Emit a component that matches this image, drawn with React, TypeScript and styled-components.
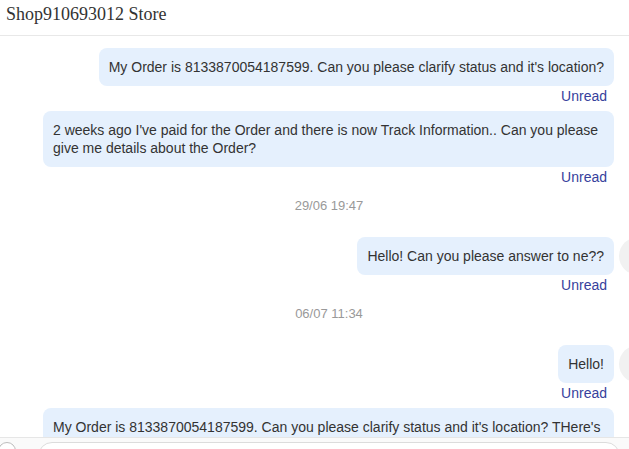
import React from "react";
import styled, { createGlobalStyle } from "styled-components";

const Global = createGlobalStyle`
  html, body { margin: 0; padding: 0; background: #ffffff; overflow: hidden; }
  body { width: 629px; height: 449px; }
  #root { width: 629px; height: 449px; overflow: hidden; }
`;

const Page = styled.div`
  width: 629px;
  height: 449px;
  display: flex;
  flex-direction: column;
  overflow: hidden;
  font-family: Arial, "Liberation Sans", sans-serif;
  color: #333333;
`;

const Header = styled.header`
  flex: 0 0 auto;
  height: 36px;
  box-sizing: border-box;
  border-bottom: 1px solid #e8e8e8;
  padding: 3px 0 0 6px;
  font-family: "Liberation Serif", "Times New Roman", serif;
  font-size: 18px;
  line-height: 22px;
  color: #333333;
`;

const Messages = styled.div`
  flex: 1 1 auto;
  min-height: 0;
  width: 658px;
  overflow: hidden;
  padding-top: 12px;
  display: flex;
  flex-direction: column;
`;

const Item = styled.div`
  display: flex;
  flex-direction: column;
  margin-bottom: 6px;
`;

const Row = styled.div`
  display: flex;
  justify-content: flex-end;
  align-items: flex-start;
  padding-left: 43px;
  gap: 5px;
`;

const Bubble = styled.div`
  max-width: 571px;
  box-sizing: border-box;
  background: #e5f0fd;
  border-radius: 8px;
  padding: 10px 10px;
  font-size: 14px;
  line-height: 18px;
  color: #333333;
`;

const Avatar = styled.div<{ $shown: boolean }>`
  flex: 0 0 39px;
  width: 39px;
  height: 38px;
  border-radius: 50%;
  background: ${(p) => (p.$shown ? "#f1f1f1" : "transparent")};
`;

const Status = styled.div`
  margin-top: 1px;
  padding-right: 51px;
  text-align: right;
  font-size: 14px;
  line-height: 18px;
  color: #36419c;
`;

const Stamp = styled.div`
  padding: 5px 0 22px;
  text-align: center;
  font-size: 13px;
  line-height: 18px;
  color: #999999;
`;

const Footer = styled.footer`
  flex: 0 0 12px;
  height: 12px;
  box-sizing: border-box;
  border-top: 1px solid #e6e6e6;
  background: #fafafa;
  display: flex;
  align-items: flex-start;
  gap: 22px;
  padding: 4px 9px 0 0;
  margin-left: -2px;
  overflow: hidden;
`;

const Emoji = styled.div`
  flex: 0 0 18px;
  height: 18px;
  border-radius: 50%;
  border: 1px solid #bdbdbd;
  box-sizing: border-box;
  background: #ffffff;
`;

const Input = styled.div`
  flex: 1 1 auto;
  height: 30px;
  border: 1px solid #dcdcdc;
  border-radius: 14px;
  background: #ffffff;
`;

type Msg =
  | { kind: "msg"; text: string; avatar?: boolean }
  | { kind: "time"; text: string };

const data: Msg[] = [
  {
    kind: "msg",
    text: "My Order is 8133870054187599. Can you please clarify status and it's location?",
  },
  {
    kind: "msg",
    text: "2 weeks ago I've paid for the Order and there is now Track Information.. Can you please give me details about the Order?",
  },
  { kind: "time", text: "29/06 19:47" },
  { kind: "msg", text: "Hello! Can you please answer to ne??", avatar: true },
  { kind: "time", text: "06/07 11:34" },
  { kind: "msg", text: "Hello!", avatar: true },
  {
    kind: "msg",
    text: "My Order is 8133870054187599. Can you please clarify status and it's location? THere's no track information about the Order. Please give me details.",
  },
];

export default function App() {
  return (
    <>
      <Global />
      <Page>
        <Header>Shop910693012 Store</Header>
        <Messages>
          {data.map((m, i) =>
            m.kind === "time" ? (
              <Stamp key={i}>{m.text}</Stamp>
            ) : (
              <Item key={i}>
                <Row>
                  <Bubble>{m.text}</Bubble>
                  <Avatar $shown={!!m.avatar} />
                </Row>
                <Status>Unread</Status>
              </Item>
            )
          )}
        </Messages>
        <Footer>
          <Emoji />
          <Input />
        </Footer>
      </Page>
    </>
  );
}
